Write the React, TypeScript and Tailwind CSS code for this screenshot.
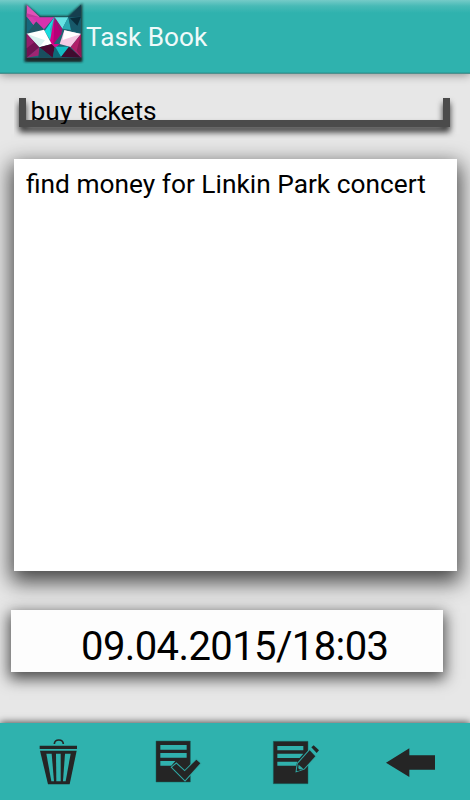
import React from "react";

const INK = "#252525";

function FoxLogo() {
  return (
    <svg className="h-[70px] w-[70px] shrink-0" viewBox="0 0 210 210">
      <defs>
        <filter id="soft" x="-20%" y="-20%" width="140%" height="140%">
          <feGaussianBlur stdDeviation="3.2" />
        </filter>
      </defs>
      <path d="M16 12 L60 48 H144 L187 10 V186 H13 Z" fill="#15272c" opacity="0.9" filter="url(#soft)" />
      <path d="M22 172 H184 V182 H20 Z" fill="#23272a" filter="url(#soft)" />
      <path d="M20 14 L60 52 H145 L183 14 V173 H20 Z" fill="#1e6674" />
      <polygon points="20,14 60,52 20,50" fill="#e052b8" />
      <polygon points="20,40 60,52 20,52" fill="#c03b9c" />
      <polygon points="20,50 60,52 40,76" fill="#d43fae" />
      <polygon points="20,50 40,76 20,101" fill="#17677b" />
      <polygon points="40,76 60,52 70,90 20,101" fill="#235767" />
      <polygon points="36,52 103,52 72,88" fill="#d633ae" />
      <polygon points="103,52 74,93 98,133" fill="#18dddf" />
      <polygon points="103,52 90,88 98,133" fill="#2daebc" />
      <polygon points="103,52 88,133 102,133" fill="#d60087" />
      <polygon points="104,52 100,133 124,102" fill="#b50077" />
      <polygon points="103,52 145,52 127,86" fill="#67e3e4" />
      <polygon points="104,52 127,86 124,102" fill="#9d1270" />
      <polygon points="127,86 145,52 153,90" fill="#2aa9b2" />
      <polygon points="145,52 183,14 183,50" fill="#153e4e" />
      <polygon points="183,50 145,52 154,91 183,100" fill="#17596a" />
      <polygon points="150,55 183,50 172,77" fill="#092d3b" />
      <polygon points="20,101 72,89 95,132 58,142" fill="#ffffff" />
      <polygon points="20,101 75,121 58,142" fill="#d8f1f0" />
      <polygon points="119,132 133,91 183,102 152,141" fill="#f5cae4" />
      <polygon points="133,91 183,102 128,120" fill="#ffffff" />
      <polygon points="20,101 58,142 20,173" fill="#731253" />
      <polygon points="20,101 43,127 20,145" fill="#951d6b" />
      <polygon points="20,173 58,142 70,164" fill="#a02473" />
      <polygon points="58,142 95,132 104,141 98,173" fill="#4b0731" />
      <polygon points="58,142 98,173 55,173" fill="#194f5f" />
      <polygon points="95,132 119,132 106,143" fill="#da098f" />
      <polygon points="106,140 147,140 123,171" fill="#14bcc4" />
      <polygon points="104,141 123,171 98,173" fill="#0d6977" />
      <polygon points="147,140 123,171 184,173" fill="#400b2e" />
      <polygon points="183,102 152,141 184,173" fill="#b02069" />
      <polygon points="183,102 184,173 170,152" fill="#8c1854" />
    </svg>
  );
}

function TrashIcon() {
  return (
    <svg className="h-[80px] w-[60px]" viewBox="0 0 180 240">
      <path d="M73 72 C74 56 99 56 100 72" fill="none" stroke={INK} strokeWidth="5" />
      <path d="M29 77 H141 V87 H29 Z" fill={INK} />
      <path d="M30 92 H140 L119 193 H54 Z" fill={INK} />
      <g fill="#30b1ad">
        <path d="M49 101 H65 L72 184 H64 Z" />
        <path d="M78 101 H92 V184 H79 Z" />
        <path d="M105 101 H122 L107 184 H99 Z" />
      </g>
    </svg>
  );
}

function DoneIcon() {
  return (
    <svg className="h-[80px] w-[65px]" viewBox="0 0 195 240">
      <path d="M33 63 H136 V186 H33 Z" fill={INK} stroke="#17645f" strokeWidth="1.5" />
      <path d="M46 75 H125 V89 H46 Z M46 99 H125 V113 H46 Z M46 123 H91 L79 137 H46 Z" fill="#30b1ad" />
      <path d="M81 142 L94 131 L119 154 L154 119 L166 130 L120 181 Z" fill={INK} stroke="#30a9a5" strokeWidth="6" paintOrder="stroke" />
    </svg>
  );
}

function EditIcon() {
  return (
    <svg className="h-[80px] w-[65px]" viewBox="0 0 195 240">
      <path d="M25 64 H129 V191 H25 Z" fill={INK} stroke="#17645f" strokeWidth="1.5" />
      <path d="M37 78 H115 V91 H37 Z M37 101 H115 L104 114 H37 Z M37 125 H97 L93 137 H37 Z" fill="#30b1ad" />
      <path d="M95 153 L98 131 L134 91 L151 109 L117 146 Z" fill={INK} stroke="#30a9a5" strokeWidth="6" paintOrder="stroke" />
      <path d="M139 82 L146 76 L162 91 L155 99 Z" fill={INK} />
      <path d="M101 134 L115 146 L99 149 Z" fill="#30a9a5" />
      <path d="M96 154 L99 144 L106 151 Z" fill={INK} />
    </svg>
  );
}

function BackIcon() {
  return (
    <svg className="h-[80px] w-[95px]" viewBox="0 0 285 240">
      <path d="M33 128 L103 85 V106 H180 V149 H103 V171 Z" fill={INK} />
    </svg>
  );
}

export default function App() {
  return (
    <div className="flex h-[800px] w-[470px] flex-col overflow-hidden bg-[#e7e7e7] font-['Roboto','Liberation_Sans',sans-serif] text-black">
      <header className="z-10 flex h-[74px] shrink-0 items-start bg-[linear-gradient(to_bottom,#75cbc8_0px,#47bab6_6px,#2fb2ae_13px,#2fb2ae_72px,#26928f_73px,#778c8b_74px)] pl-5 shadow-[0_1px_9px_rgba(0,0,0,0.4)]">
        <FoxLogo />
        <h1 className="-ml-[4px] mt-[21px] whitespace-nowrap text-[26.2px] leading-8 font-normal text-[#effafa]">Task Book</h1>
      </header>

      <main className="flex h-[649px] shrink-0 flex-col">
        <div className="mt-[19px] ml-[14px] grid h-[46px] w-[443px] shrink-0 overflow-hidden pt-[5px] pl-[5px]">
          <div className="col-start-1 row-start-1 h-[29px] w-[431px] border-x-[7px] border-b-[7px] border-[#4b4b4b] drop-shadow-[0_5px_3px_rgba(0,0,0,0.8)]" />
          <div className="z-10 col-start-1 row-start-1 -mt-[3px] h-[29px] overflow-hidden whitespace-nowrap pl-[11.5px] text-[26.3px] leading-[32px]">buy tickets</div>
        </div>
        <section className="mt-[19.5px] ml-[14px] h-[412px] w-[443px] shrink-0 bg-white pt-[10px] pl-[12px] shadow-[0_8px_20px_3px_rgba(0,0,0,0.7)]">
          <p className="whitespace-nowrap text-[26.3px] leading-[30px]">find money for Linkin Park concert</p>
        </section>
        <section className="mt-[39.5px] ml-[11px] flex h-[62px] w-[432px] shrink-0 items-center bg-[#fdfdfd] pt-[12px] pl-[70px] shadow-[0_5px_14px_2px_rgba(0,0,0,0.68)]">
          <time className="whitespace-nowrap text-[40px] leading-[48px] tracking-[-0.6px]">09.04.2015/18:03</time>
        </section>
      </main>

      <footer className="flex h-[77px] shrink-0 items-end bg-[#2fb2ae] pl-[30px] shadow-[0_-1px_7px_rgba(0,0,0,0.65)]">
        <button aria-label="Delete task"><TrashIcon /></button>
        <button className="ml-[55px]" aria-label="Complete task"><DoneIcon /></button>
        <button className="ml-[55px]" aria-label="Edit task"><EditIcon /></button>
        <button className="ml-[45px]" aria-label="Go back"><BackIcon /></button>
      </footer>
    </div>
  );
}
